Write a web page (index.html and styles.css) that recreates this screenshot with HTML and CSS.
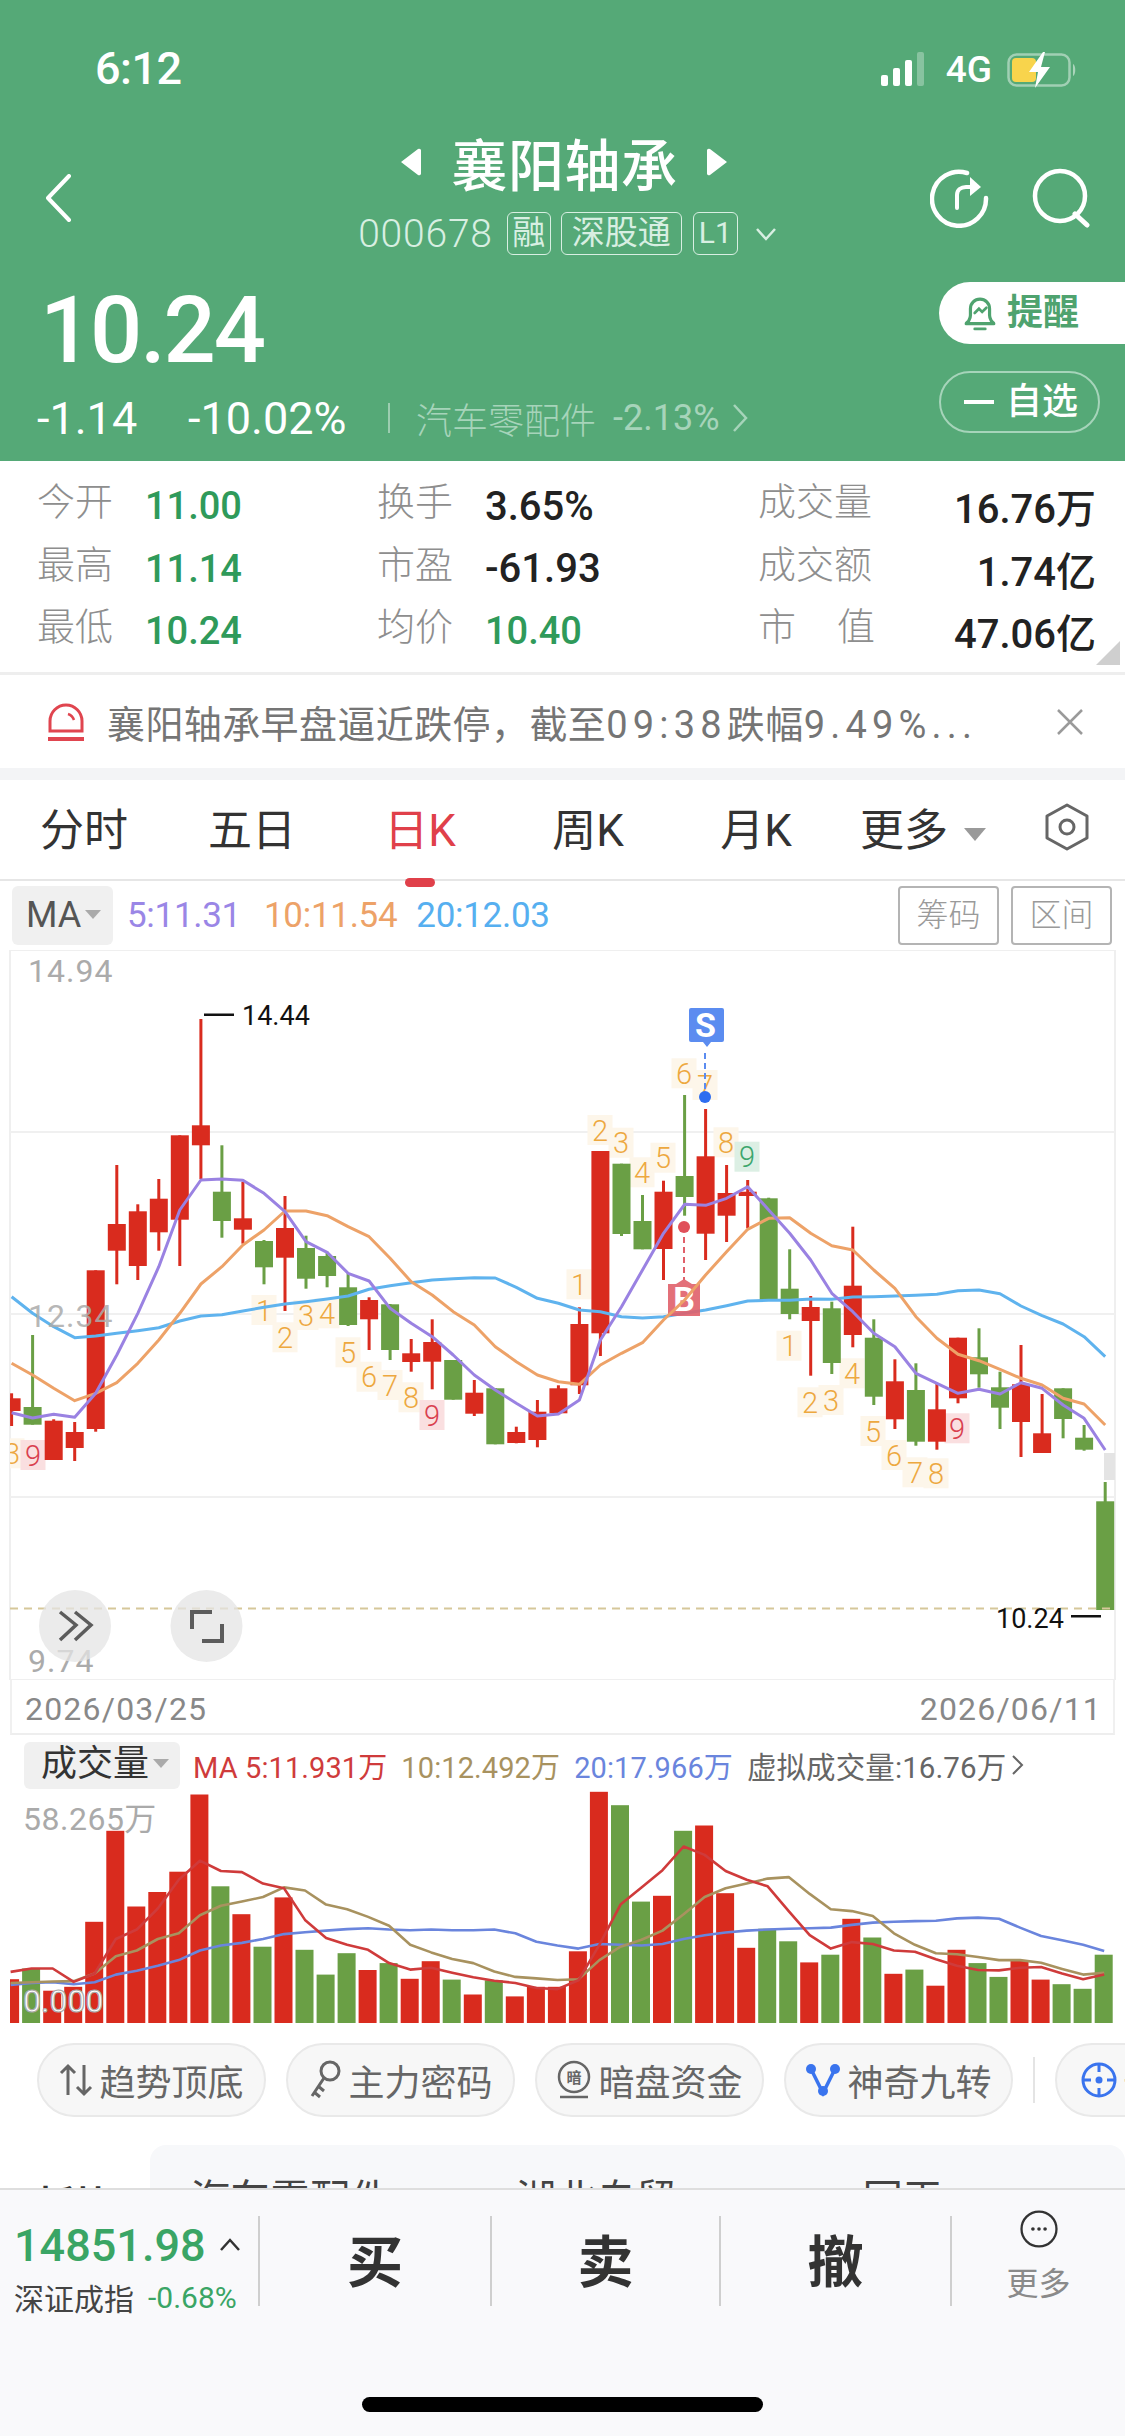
FILE: index.html
```html
<!DOCTYPE html>
<html lang="zh-CN">
<head>
<meta charset="utf-8">
<title>襄阳轴承</title>
<link rel="stylesheet" href="styles.css">
</head>
<body>
<div class="page">
  <header class="hero">
    <div class="status">
      <span class="clock">6:12</span>
      <div class="status-right">
        <svg class="signal" width="46" height="34" viewBox="0 0 46 34"><rect x="0" y="23" width="7" height="11" rx="2" fill="#fff"/><rect x="12" y="16" width="7" height="18" rx="2" fill="#fff"/><rect x="24" y="8" width="7" height="26" rx="2" fill="#fff"/><rect x="36" y="0" width="7" height="34" rx="2" fill="#fff" opacity=".3"/></svg>
        <span class="net">4G</span>
        <svg class="battery" width="70" height="36" viewBox="0 0 70 36"><rect x="1.5" y="2.5" width="61" height="31" rx="8" fill="none" stroke="#fff" stroke-opacity=".45" stroke-width="2.5"/><rect x="5" y="6" width="24" height="24" rx="4" fill="#f8d44c"/><path d="M66 12c3 1 3 11 0 12z" fill="#fff" opacity=".5"/><path d="M36 0 22 20h9l-3 16 15-21h-9l4-15z" fill="#fff"/></svg>
      </div>
    </div>
    <div class="nav">
      <svg class="back" width="28" height="48" viewBox="0 0 28 48"><path d="M25 2 4 24l21 22" fill="none" stroke="#fff" stroke-width="4" stroke-linecap="round" stroke-linejoin="round"/></svg>
      <div class="nav-mid">
        <div class="title-row">
          <svg class="arrow" width="20" height="28" viewBox="0 0 20 28"><path d="M0 14 17 1a2 2 0 0 1 3 2v22a2 2 0 0 1-3 2z" fill="#fff"/></svg>
          <h1 class="title">襄阳轴承</h1>
          <svg class="arrow" width="20" height="28" viewBox="0 0 20 28"><path d="M20 14 3 1a2 2 0 0 0-3 2v22a2 2 0 0 0 3 2z" fill="#fff"/></svg>
        </div>
        <div class="sub-row">
          <span class="code">000678</span>
          <span class="tag tag-a">融</span>
          <span class="tag tag-b">深股通</span>
          <span class="tag tag-c">L1</span>
          <svg class="caret" width="22" height="14" viewBox="0 0 22 14"><path d="M2 2l9 10 9-10" fill="none" stroke="#d8efe2" stroke-width="2.5"/></svg>
        </div>
      </div>
      <div class="nav-icons">
        <svg width="60" height="60" viewBox="0 0 60 60"><path d="M37 5A27 27 0 1 0 56 30" fill="none" stroke="#fff" stroke-width="4.5" stroke-linecap="round"/><path d="M27 40V27c0-5 4-8 9-8h10" fill="none" stroke="#fff" stroke-width="4" stroke-linecap="round"/><path d="M40 9l11 10-11 9z" fill="#fff"/></svg>
        <svg width="60" height="60" viewBox="0 0 60 60"><circle cx="29" cy="28" r="25" fill="none" stroke="#fff" stroke-width="4.5"/><path d="M44 46l12 11" stroke="#fff" stroke-width="5" stroke-linecap="round"/></svg>
      </div>
    </div>
    <div class="quote">
      <div class="quote-left">
        <div class="price">10.24</div>
        <div class="change">
          <span class="chg-a">-1.14</span>
          <span class="chg-b">-10.02%</span>
          <span class="chg-sep"></span>
          <span class="sector">汽车零配件</span>
          <span class="sector-pct">-2.13%</span>
          <svg width="16" height="30" viewBox="0 0 16 30"><path d="M2 2l12 13L2 28" fill="none" stroke="#a6d4ba" stroke-width="2.5"/></svg>
        </div>
      </div>
      <div class="quote-right">
        <div class="pill pill-alert">
          <svg width="34" height="40" viewBox="0 0 32 36"><path d="M5 26c1-2 2-3 2-6v-6a9 9 0 0 1 18 0v6c0 3 1 4 2 6 1 1 2 1 2 2H3c0-1 1-1 2-2z" fill="none" stroke="#4fa36f" stroke-width="3" stroke-linejoin="round"/><path d="M11 33h10M11 18l4-4 3 3 4-4" fill="none" stroke="#4fa36f" stroke-width="2.5" stroke-linecap="round"/></svg>
          <span>提醒</span>
        </div>
        <div class="pill pill-watch"><span class="minus"></span><span>自选</span></div>
      </div>
    </div>
  </header>

  <section class="stats">
    <div class="stat"><span class="lbl">今开</span><span class="val up">11.00</span></div>
    <div class="stat"><span class="lbl">换手</span><span class="val">3.65%</span></div>
    <div class="stat stat-r"><span class="lbl">成交量</span><span class="val">16.76万</span></div>
    <div class="stat"><span class="lbl">最高</span><span class="val up">11.14</span></div>
    <div class="stat"><span class="lbl">市盈</span><span class="val">-61.93</span></div>
    <div class="stat stat-r"><span class="lbl">成交额</span><span class="val">1.74亿</span></div>
    <div class="stat"><span class="lbl">最低</span><span class="val up">10.24</span></div>
    <div class="stat"><span class="lbl">均价</span><span class="val up">10.40</span></div>
    <div class="stat stat-r"><span class="lbl lbl-wide">市<i></i>值</span><span class="val">47.06亿</span></div>
    <span class="corner"></span>
  </section>

  <section class="news">
    <svg width="38" height="40" viewBox="0 0 38 40"><path d="M3 29V19a16 16 0 0 1 32 0v10z" fill="none" stroke="#e0454f" stroke-width="3"/><path d="M21 12c3 1 5 3 6 6" fill="none" stroke="#e0454f" stroke-width="2.5"/><rect x="1" y="35" width="36" height="4" fill="#e0454f"/></svg>
    <p class="news-text">襄阳轴承早盘逼近跌停，截至<span class="news-num">09:38</span>跌幅<span class="news-num">9.49%...</span></p>
    <svg class="news-x" width="28" height="26" viewBox="0 0 28 26"><path d="M2 1l24 24M26 1 2 25" stroke="#9a9a9a" stroke-width="2.5"/></svg>
  </section>

  <nav class="tabs">
    <span class="tab">分时</span>
    <span class="tab">五日</span>
    <span class="tab tab-on">日K</span>
    <span class="tab">周K</span>
    <span class="tab">月K</span>
    <span class="tab tab-more">更多<i class="tri"></i></span>
    <svg class="hex" width="46" height="48" viewBox="0 0 46 48"><path d="M23 2 43 13v22L23 46 3 35V13z" fill="none" stroke="#666" stroke-width="3" stroke-linejoin="round"/><circle cx="23" cy="24" r="7" fill="none" stroke="#666" stroke-width="3"/></svg>
  </nav>

  <div class="ma-row">
    <span class="ma-box">MA<i class="tri tri-s"></i></span>
    <span class="ma m5">5:11.31</span>
    <span class="ma m10">10:11.54</span>
    <span class="ma m20">20:12.03</span>
    <span class="ma-btn ma-btn-first">筹码</span>
    <span class="ma-btn">区间</span>
  </div>

  <svg id="kline" class="kline" width="1125" height="730" viewBox="0 950 1125 730"></svg>

  <div class="dates"><span>2026/03/25</span><span>2026/06/11</span></div>

  <div class="vol-head">
    <span class="vol-box">成交量<i class="tri tri-s"></i></span>
    <span class="vma v5">MA 5:11.931万</span>
    <span class="vma v10">10:12.492万</span>
    <span class="vma v20">20:17.966万</span>
    <span class="vma vv">虚拟成交量:16.76万</span>
    <svg width="12" height="22" viewBox="0 0 12 22"><path d="M1 2l9 9-9 9" fill="none" stroke="#666" stroke-width="2"/></svg>
  </div>

  <svg id="vol" class="vol" width="1125" height="240" viewBox="0 1790 1125 240"></svg>

  <div class="chips">
    <span class="chip">
      <svg width="34" height="34" viewBox="0 0 34 34"><path d="M9 32V3M2 10l7-7 7 7" fill="none" stroke="#666" stroke-width="3"/><path d="M25 2v29M18 24l7 7 7-7" fill="none" stroke="#666" stroke-width="3"/></svg>
      趋势顶底
    </span>
    <span class="chip">
      <svg width="34" height="40" viewBox="0 0 34 40"><circle cx="22" cy="11" r="9" fill="none" stroke="#666" stroke-width="3"/><path d="M16 18 4 36M6 32l6 5M10 26l6 5" fill="none" stroke="#666" stroke-width="3"/></svg>
      主力密码
    </span>
    <span class="chip">
      <svg width="36" height="40" viewBox="0 0 36 40"><circle cx="18" cy="17" r="15" fill="none" stroke="#666" stroke-width="2.5"/><path d="M4 37h28" stroke="#666" stroke-width="2.5"/><text x="18" y="23" text-anchor="middle" class="coin">暗</text></svg>
      暗盘资金
    </span>
    <span class="chip">
      <svg width="36" height="34" viewBox="0 0 36 34"><path d="M6 6l12 24L30 6" fill="none" stroke="#3a74ee" stroke-width="3.5"/><circle cx="6" cy="6" r="5" fill="#3a74ee"/><circle cx="30" cy="6" r="5" fill="#3a74ee"/><circle cx="18" cy="28" r="5" fill="#3a74ee"/></svg>
      神奇九转
    </span>
    <span class="chip-sep"></span>
    <span class="chip chip-last">
      <svg width="36" height="36" viewBox="0 0 36 36"><circle cx="18" cy="18" r="16" fill="none" stroke="#3a74ee" stroke-width="3"/><circle cx="18" cy="18" r="3.5" fill="#3a74ee"/><path d="M18 1v9M18 26v9M1 18h9M26 18h9" stroke="#3a74ee" stroke-width="3"/></svg>
      十字
    </span>
  </div>

  <div class="peek">
    <span class="peek-left">板块</span>
    <div class="peek-card">
      <span class="pk1">汽车零配件</span>
      <span class="pk2">湖北自贸</span>
      <span class="pk3">回天</span>
    </div>
  </div>

  <footer class="bar">
    <div class="bar-row">
      <div class="index">
        <div class="index-top"><span class="index-val">14851.98</span><svg width="22" height="14" viewBox="0 0 22 14"><path d="M2 12l9-10 9 10" fill="none" stroke="#333" stroke-width="2.5"/></svg></div>
        <div class="index-bot"><span class="index-name">深证成指</span><span class="index-pct">-0.68%</span></div>
      </div>
      <div class="act act-a">买</div>
      <div class="act act-b">卖</div>
      <div class="act act-c">撤</div>
      <div class="more">
        <svg width="50" height="50" viewBox="0 0 50 50"><circle cx="25" cy="25" r="23" fill="none" stroke="#333" stroke-width="3"/><circle cx="17" cy="25" r="2.4" fill="#333"/><circle cx="25" cy="25" r="2.4" fill="#333"/><circle cx="33" cy="25" r="2.4" fill="#333"/></svg>
        <span>更多</span>
      </div>
    </div>
    <div class="home"></div>
  </footer>
</div>
<script src="chart.js"></script>
</body>
</html>
```
FILE: styles.css
```css
* { box-sizing: border-box; }
html, body { margin: 0; padding: 0; }
body { background: #fff; font-family: Roboto, "Noto Sans CJK SC", sans-serif; }
.page { width: 1125px; height: 2436px; overflow: hidden; display: flex; flex-direction: column; }
i { font-style: normal; }

.hero { height: 461px; flex: none; background: #55a977; color: #fff; }
.status { height: 120px; display: flex; justify-content: space-between; padding: 44px 48px 0 95px; }
.clock { font-size: 45px; font-weight: 500; line-height: 50px; letter-spacing: -.5px; }
.status-right { display: flex; align-items: flex-start; padding-top: 8px; }
.signal { margin-right: 19px; }
.net { font-size: 37px; font-weight: 500; line-height: 36px; margin-right: 15px; }

.nav { height: 156px; display: grid; grid-template-columns: 1fr auto 1fr; align-items: center; padding: 0 34px 0 44px; }
.nav-mid { display: flex; flex-direction: column; align-items: center; align-self: start; }
.title-row { height: 80px; display: flex; align-items: center; gap: 30px; margin-left: -6px; padding-top: 3px; }
.title { margin: 10px 0 0; font-size: 56px; line-height: 70px; font-weight: 500; letter-spacing: .5px; }
.sub-row { height: 62px; display: flex; align-items: center; color: #d8efe2; padding-top: 5px; }
.code { font-size: 39px; font-weight: 300; letter-spacing: .8px; margin-right: 14px; }
.tag { height: 43px; line-height: 39px; font-size: 33px; font-weight: 400; border: 1.5px solid #d8efe2; border-radius: 6px; text-align: center; }
.tag-a { width: 44px; margin-right: 10px; }
.tag-b { width: 121px; margin-right: 11px; }
.tag-c { width: 45px; margin-right: 17px; font-size: 30px; }
.nav-icons { justify-self: end; display: flex; gap: 41px; }
.back { justify-self: start; }

.quote { display: flex; justify-content: space-between; }
.quote-left { padding-left: 37px; }
.price { height: 104px; font-size: 92px; line-height: 110px; font-weight: 500; margin-left: 3px; letter-spacing: -2.2px; }
.change { height: 76px; display: flex; align-items: center; }
.chg-a, .chg-b { font-size: 45px; font-weight: 400; }
.chg-a { width: 151px; }
.chg-b { width: 200px; }
.chg-sep { width: 2px; height: 30px; background: #9ccdb0; margin-right: 26px; }
.sector { font-size: 36px; font-weight: 300; color: #a6d4ba; margin-right: 17px; }
.sector-pct { font-size: 36px; font-weight: 400; color: #a6d4ba; margin-right: 12px; }
.quote-right { width: 186px; padding-top: 6px; display: flex; flex-direction: column; gap: 27px; }
.pill { height: 62px; display: flex; align-items: center; font-size: 36px; line-height: 62px; }
.pill-alert { background: #fff; color: #4fa36f; border-radius: 31px 0 0 31px; padding-left: 24px; gap: 10px; font-weight: 700; }
.pill-watch { width: 161px; border: 2px solid #a6d4ba; border-radius: 31px; padding-left: 23px; gap: 12px; font-weight: 500; }
.minus { width: 30px; height: 4px; background: #fff; }

.stats { position: relative; height: 211px; flex: none; padding: 11px 29px 0 37px; display: grid; grid-template-columns: 340px 381px 338px; grid-auto-rows: 62.5px; align-items: center; }
.stat { display: flex; align-items: center; }
.stat-r { justify-content: space-between; }
.lbl { width: 108px; font-size: 38px; color: #8e8e8e; font-weight: 300; margin-top: -9px; }
.stat-r .lbl { width: 117px; }
.lbl-wide { display: flex; justify-content: space-between; }
.val { font-size: 40px; font-weight: 500; color: #222; margin-top: 6px; }
.val.up { color: #2f9a5a; font-size: 38px; }
.corner { position: absolute; right: 5px; bottom: 7px; width: 0; height: 0; border-left: 24px solid transparent; border-bottom: 24px solid #cfcfcf; }

.news { height: 96px; flex: none; border-top: 3px solid #eee; display: flex; align-items: center; padding: 0 41px 0 47px; }
.news-text { margin: 0 0 0 22px; flex: 1; font-size: 38px; color: #757575; font-weight: 400; white-space: nowrap; letter-spacing: .4px; }
.news-num { letter-spacing: 5.2px; }

.tabs { margin-top: 12px; box-shadow: 0 -12px 0 #f3f4f6; position: relative; height: 101px; flex: none; border-bottom: 2px solid #e6e6e6; padding-bottom: 6px; display: grid; grid-template-columns: repeat(5, 168px) 170px 1fr; align-items: center; }
.tab { text-align: center; font-size: 44px; color: #333; font-weight: 400; }
.tab-on { color: #e0404a; position: relative; }
.tab-on::after { content: ""; position: absolute; left: 69px; bottom: -28px; width: 30px; height: 9px; border-radius: 5px; background: #e0404a; }
.tab-more { text-align: left; padding-left: 20px; white-space: nowrap; }
.tri { display: inline-block; width: 0; height: 0; border: 11px solid transparent; border-top: 13px solid #9a9a9a; border-bottom: 0; margin-left: 16px; vertical-align: 5px; }
.tri-s { border-width: 8px; border-top-width: 9px; border-bottom: 0; margin-left: 4px; vertical-align: 8px; border-top-color: #aaa; }
.hex { margin-left: 34px; }

.ma-row { height: 69px; flex: none; display: flex; align-items: center; padding: 0 13px 0 12px; }
.ma-box { width: 101px; height: 59px; background: #f0f0f0; border-radius: 6px; font-size: 36px; line-height: 59px; color: #555; padding-left: 14px; margin-right: 14px; font-weight: 400; white-space: nowrap; }
.ma { font-size: 35px; font-weight: 400; letter-spacing: -.3px; }
.m5 { color: #9a86e6; margin-right: 23px; }
.m10 { color: #eda268; margin-right: 19px; }
.m20 { color: #56aff0; }
.ma-btn { width: 101px; height: 59px; border: 2px solid #b4b4b4; border-radius: 4px; font-size: 32px; line-height: 54px; color: #9a9a9a; text-align: center; margin-left: 12px; font-weight: 300; }
.ma-btn-first { margin-left: auto; }

.kline { display: block; flex: none; }
.k-label { font-size: 32px; fill: #ababab; font-weight: 400; letter-spacing: 1px; }
.k-tick { font-size: 27px; fill: #111; font-weight: 400; }
.n9 { font-size: 29px; font-weight: 300; text-anchor: middle; }
.mark { font-size: 34px; font-weight: 700; fill: #fff; text-anchor: middle; }

.dates { height: 55px; flex: none; margin: 0 10px; padding: 5px 11px 0 13px; border-bottom: 2px solid #eee; border-left: 2px solid #f0f0f0; border-right: 2px solid #f0f0f0; display: flex; justify-content: space-between; align-items: center; font-size: 32px; letter-spacing: 1.2px; color: #888; }

.vol-head { height: 55px; flex: none; display: flex; align-items: center; padding: 5px 0 0 24px; white-space: nowrap; }
.vol-box { width: 156px; height: 47px; background: #f0f0f0; border-radius: 6px; font-size: 36px; line-height: 45px; color: #333; padding-left: 17px; margin-right: 13px; }
.vma { font-size: 29px; margin-right: 14px; letter-spacing: .1px; }
.v5 { color: #cf3b3b; }
.v10 { color: #a8925f; }
.v20 { color: #6a85dd; }
.vv { color: #666; font-size: 29.5px; margin-right: 6px; }
.vol { display: block; flex: none; }
.vol-label { font-size: 32px; fill: #aaa; letter-spacing: .5px; }
.vol-zero { font-size: 32px; fill: #fff; stroke: #aaa; stroke-width: 1.2px; }

.chips { height: 74px; flex: none; margin-top: 13px; padding-left: 37px; display: flex; align-items: center; gap: 20px; white-space: nowrap; }
.chip { width: 229px; height: 74px; flex: none; background: #f7f7f7; border: 2px solid #e9e9e9; border-radius: 37px; display: flex; align-items: center; justify-content: center; gap: 6px; font-size: 36px; color: #666; }
.chip-sep { width: 2px; height: 46px; background: #e4e4e4; flex: none; }
.chip-last { justify-content: flex-start; padding-left: 24px; }
.coin { font-size: 15px; fill: #666; font-weight: 700; }

.peek { height: 71px; flex: none; overflow: hidden; position: relative; display: flex; padding: 28px 0 0 37px; }
.peek-left { width: 113px; flex: none; padding-top: 40px; font-size: 38px; line-height: 40px; font-weight: 700; color: #333; }
.peek-card { flex: 1; background: #f7f8fa; border-radius: 16px 16px 0 0; height: 100px; padding: 35px 0 0 40px; font-size: 40px; line-height: 40px; color: #444; }
.pk1 { margin-right: 116px; }
.pk2 { margin-right: 177px; }

.bar { flex: 1; background: #f9f9fb; border-top: 2px solid #dedede; padding-top: 26px; }
.bar-row { height: 90px; display: flex; }
.index { width: 258px; flex: none; padding: 3px 0 0 14px; white-space: nowrap; }
.index-top { display: flex; align-items: center; gap: 13px; height: 52px; }
.index-val { font-size: 45px; font-weight: 500; color: #3aa565; }
.index-bot { display: flex; gap: 14px; align-items: center; height: 40px; margin-top: 6px; }
.index-name { font-size: 30px; color: #444; }
.index-pct { font-size: 30px; color: #3aa565; }
.act { border-left: 2px solid #cfcfcf; text-align: center; font-size: 56px; font-weight: 700; color: #333; line-height: 94px; flex: none; }
.act-a { width: 232px; }
.act-b { width: 229px; }
.act-c { width: 231px; }
.more { flex: 1; border-left: 2px solid #cfcfcf; display: flex; flex-direction: column; align-items: center; margin-top: 0; }
.more svg { margin-top: -6px; }
.more span { font-size: 32px; color: #8a8a8a; line-height: 44px; margin-top: 14px; }
.home { width: 401px; height: 15px; background: #000; border-radius: 8px; margin: 91px 0 0 362px; }
```
FILE: chart.js
```js
// Chart data, in the screen space of the two SVG canvases.
var X = function (i) { return 11.6 + 21.03 * i; };
var K = function (z) { return +(950 + z / 3).toFixed(1); };
var V = function (z) { return +(1440 + z / 2.615).toFixed(1); };
var RED = '#d92b1e', GRN = '#6a9f45';

// colour, wick top, body top, body bottom, wick bottom
var candles = [
  ['r',1330,1345,1383,1428],['g',1155,1371,1424,1424],['r',1408,1412,1530,1530],['r',1416,1446,1494,1533],
  ['r',961,961,1437,1445],['r',645,822,902,1003],['r',763,784,948,990],['r',687,746,847,902],
  ['r',556,556,809,948],['r',207,526,586,687],['g',586,725,813,863],['r',695,805,839,881],
  ['g',870,873,952,1003],['r',738,834,923,1083],['g',857,894,986,1016],['g',905,918,978,1012],
  ['g',970,1012,1125,1128],['r',1042,1050,1108,1200],['g',1062,1063,1200,1230],['r',1167,1210,1236,1265],
  ['r',1108,1176,1235,1318],['g',1230,1230,1349,1349],['r',1290,1328,1391,1398],['g',1315,1315,1483,1483],
  ['r',1430,1446,1479,1480],['r',1350,1385,1470,1492],['r',1306,1315,1390,1392],['r',1072,1122,1306,1332],
  ['r',603,603,1150,1218],['g',641,641,852,858],['g',735,813,898,898],['r',692,725,897,990],
  ['g',435,678,741,797],['r',477,619,851,930],['r',645,729,797,876],['r',690,725,738,835],
  ['g',743,745,1050,1050],['g',898,1016,1092,1108],['r',1038,1071,1113,1277],['g',1055,1075,1239,1272],
  ['r',830,1007,1155,1192],['g',1108,1163,1340,1365],['r',1228,1294,1408,1437],['g',1240,1320,1475,1487],
  ['r',1300,1378,1475,1499],['r',1163,1163,1345,1360],['g',1135,1222,1273,1313],['g',1265,1312,1373,1437],
  ['r',1185,1303,1416,1521],['r',1332,1450,1509,1509],['g',1315,1315,1407,1465],['g',1425,1463,1499,1502],
  ['g',1596,1654,1980,1980]
];

var ma5 = [1388,1404,1393,1402,1330,1215,1090,950,780,690,687,691,730,785,875,907,970,993,1075,1120,1160,1215,1275,1320,1360,1398,1392,1350,1170,1070,960,850,763,766,745,710,780,850,930,1030,1085,1150,1190,1270,1300,1330,1318,1332,1298,1315,1365,1405,1500];
var ma10 = [1240,1275,1315,1352,1330,1298,1240,1170,1090,1002,950,885,840,783,783,797,830,860,925,995,1035,1085,1125,1190,1235,1275,1295,1303,1245,1210,1178,1110,1050,975,905,838,805,803,850,887,900,960,1015,1100,1165,1213,1232,1258,1285,1305,1345,1362,1425];
var ma20 = [1040,1090,1130,1163,1158,1150,1142,1133,1113,1098,1094,1083,1072,1062,1055,1047,1038,1018,1007,998,990,986,983,984,1012,1045,1060,1080,1085,1100,1104,1100,1090,1080,1067,1053,1051,1051,1047,1048,1041,1040,1038,1036,1033,1022,1020,1031,1068,1097,1122,1160,1220];

// digit, full x, zoom y, kind
var nines = [
  ['3',12,1510,'o'],['9',33,1515,'p'],
  ['1',264,1080,'o'],['2',285,1162,'o'],['3',306,1095,'o'],['4',327,1090,'o'],['5',348,1207,'o'],['6',369,1280,'o'],['7',390,1305,'o'],['8',411,1342,'o'],['9',432,1395,'p'],
  ['1',579,1003,'o'],['2',600,540,'o'],['3',621,578,'o'],['4',642,667,'o'],['5',663,623,'o'],['6',684,370,'o'],['7',705,405,'o'],['8',726,577,'o'],['9',747,620,'n'],
  ['1',789,1187,'o'],['2',810,1357,'o'],['3',831,1350,'o'],['4',852,1270,'o'],['5',873,1443,'o'],['6',894,1515,'o'],['7',915,1567,'o'],['8',936,1570,'o'],['9',957,1435,'p']
];

var vols = [
  ['r',1410],['g',1382],['r',1440],['r',1430],['r',1260],['r',1022],['r',1220],['r',1182],['r',1129],['r',927],
  ['g',1167],['r',1240],['g',1325],['r',1196],['g',1333],['g',1398],['g',1342],['r',1386],['g',1368],['r',1409],
  ['r',1363],['g',1411],['r',1450],['g',1413],['r',1455],['r',1430],['r',1430],['r',1337],['r',920],['g',955],
  ['g',1207],['r',1192],['g',1022],['r',1008],['r',1185],['r',1328],['g',1278],['g',1311],['r',1366],['g',1346],
  ['r',1252],['g',1301],['r',1396],['g',1385],['r',1427],['r',1333],['g',1368],['g',1404],['r',1362],['r',1411],
  ['g',1423],['g',1435],['g',1346]
];
var vma5 = [1391,1382,1382,1417,1395,1305,1280,1225,1150,1100,1127,1130,1160,1172,1255,1302,1320,1333,1368,1385,1380,1393,1405,1414,1420,1433,1436,1413,1320,1215,1170,1125,1063,1085,1127,1150,1167,1232,1295,1330,1313,1318,1335,1338,1358,1375,1386,1387,1380,1378,1395,1410,1398];
var vma10 = [1420,1418,1416,1415,1395,1350,1335,1305,1290,1243,1218,1207,1195,1170,1178,1215,1227,1247,1270,1320,1340,1357,1368,1390,1404,1408,1412,1410,1360,1325,1307,1283,1240,1195,1172,1160,1147,1143,1187,1227,1232,1245,1290,1320,1342,1345,1352,1360,1360,1367,1383,1398,1393];
var vma20 = [1425,1420,1418,1423,1418,1398,1388,1375,1360,1335,1322,1315,1305,1292,1287,1283,1279,1277,1280,1282,1280,1282,1282,1280,1290,1312,1322,1330,1318,1320,1322,1318,1305,1295,1288,1283,1280,1278,1277,1275,1268,1262,1260,1258,1257,1251,1249,1252,1275,1297,1308,1320,1336];

function poly(arr, map, color, w, dx) {
  var pts = arr.map(function (z, i) { return (X(i) + (dx || 0)).toFixed(1) + ',' + map(z); }).join(' ');
  return '<polyline points="' + pts + '" fill="none" stroke="' + color + '" stroke-width="' + w + '" stroke-linejoin="round"/>';
}
function rect(x, y, w, h, fill, extra) {
  return '<rect x="' + x + '" y="' + y + '" width="' + w + '" height="' + h + '" fill="' + fill + '"' + (extra || '') + '/>';
}

var k = '';
k += '<defs><clipPath id="plot"><rect x="10" y="950" width="1105" height="730"/></clipPath></defs>';
k += rect(10, 950, 1105, 730, '#fff', ' stroke="#efefef" stroke-width="2"');
[1131, 1313, 1496].forEach(function (y) { k += rect(10, y, 1105, 2, '#f0f0f0'); });

k += '<g clip-path="url(#plot)">';
// turn-count labels sit behind the candles
nines.forEach(function (n) {
  var y = K(n[2]);
  var bg = n[3] === 'o' ? '#fdf6ea' : n[3] === 'p' ? '#fadfe0' : '#dcefe4';
  var fg = n[3] === 'o' ? '#eda83f' : n[3] === 'p' ? '#d9404f' : '#3da66d';
  k += rect(n[1] - 12.5, y - 15, 25, 30, bg);
  k += '<text x="' + n[1] + '" y="' + (y + 10.5) + '" class="n9" fill="' + fg + '">' + n[0] + '</text>';
});
k += rect(1104, 1453, 11, 27, '#e4e4e4');

candles.forEach(function (c, i) {
  var color = c[0] === 'r' ? RED : GRN, x = X(i);
  k += rect((x - 1.5).toFixed(1), K(c[1]), 3, (K(c[4]) - K(c[1])).toFixed(1), color);
  k += rect((x - 9).toFixed(1), K(c[2]), 18, (K(c[3]) - K(c[2])).toFixed(1), color);
});
k += poly(ma20, K, '#5fb3ee', 3);
k += poly(ma10, K, '#eda268', 3);
k += poly(ma5, K, '#9a82e2', 3);
k += '</g>';

// B mark
k += '<circle cx="684" cy="1227" r="6" fill="#e0505a"/>';
k += '<path d="M684 1237V1280" stroke="#e0606a" stroke-width="2" stroke-dasharray="6 4"/>';
k += '<path d="M668 1284h8l8-5 8 5h8v32h-32z" fill="#e0606a" fill-opacity=".9"/>';
k += '<text x="684" y="1311" class="mark">B</text>';
k += poly(ma10, K, '#eda268', 3).replace('<polyline', '<polyline clip-path="url(#bclip)"');
k += '<defs><clipPath id="bclip"><rect x="668" y="1284" width="32" height="32"/></clipPath></defs>';
// S mark
k += '<path d="M691 1008h31a2 2 0 0 1 2 2v30a2 2 0 0 1-2 2h-11l-4 5-4-5h-12a2 2 0 0 1-2-2v-30a2 2 0 0 1 2-2z" fill="#5b8cf0"/>';
k += '<text x="705.5" y="1037" class="mark">S</text>';
k += '<path d="M705 1053V1090" stroke="#5b8cf0" stroke-width="2" stroke-dasharray="6 4"/>';
k += '<circle cx="705" cy="1097" r="6" fill="#2e6df0"/>';

// price scale and extreme ticks
k += '<text x="28" y="982" class="k-label">14.94</text>';
k += '<text x="28" y="1327" class="k-label" opacity=".85">12.34</text>';
k += '<text x="28" y="1672" class="k-label">9.74</text>';
k += rect(204, 1013.5, 30, 2.5, '#111');
k += '<text x="242" y="1025" class="k-tick">14.44</text>';
k += '<path d="M10 1608.5H1115" stroke="#d6c79a" stroke-width="2" stroke-dasharray="8 6"/>';
k += '<text x="996" y="1628" class="k-tick">10.24</text>';
k += rect(1071, 1615, 30, 2.5, '#111');

// round overlay buttons
k += '<circle cx="75" cy="1626" r="36" fill="#e4e4e4" fill-opacity=".75"/>';
k += '<circle cx="206.5" cy="1626" r="36" fill="#e4e4e4" fill-opacity=".75"/>';
k += '<path d="M60 1612l16 13-16 15M75 1612l16 13-16 15" fill="none" stroke="#5c5c5c" stroke-width="3.5"/>';
k += '<path d="M192 1629v-17h20M222 1624v17h-20" fill="none" stroke="#5c5c5c" stroke-width="4"/>';
document.getElementById('kline').innerHTML = k;

var v = '';
vols.forEach(function (b, i) {
  var x = X(i) - 10.5, top = V(b[1]);
  var left = Math.max(x, 10);
  v += rect(left.toFixed(1), top, (x + 18 - left).toFixed(1), (2023 - top).toFixed(1), b[0] === 'r' ? RED : GRN);
});
v += poly(vma20, V, '#6a85dd', 2.6, -1);
v += poly(vma10, V, '#a8925f', 2.6, -1);
v += poly(vma5, V, '#cf3b3b', 2.6, -1);
v += '<text x="23" y="1830" class="vol-label">58.265万</text>';
v += '<text x="23" y="2012" class="vol-zero">0.000</text>';
document.getElementById('vol').innerHTML = v;
```
